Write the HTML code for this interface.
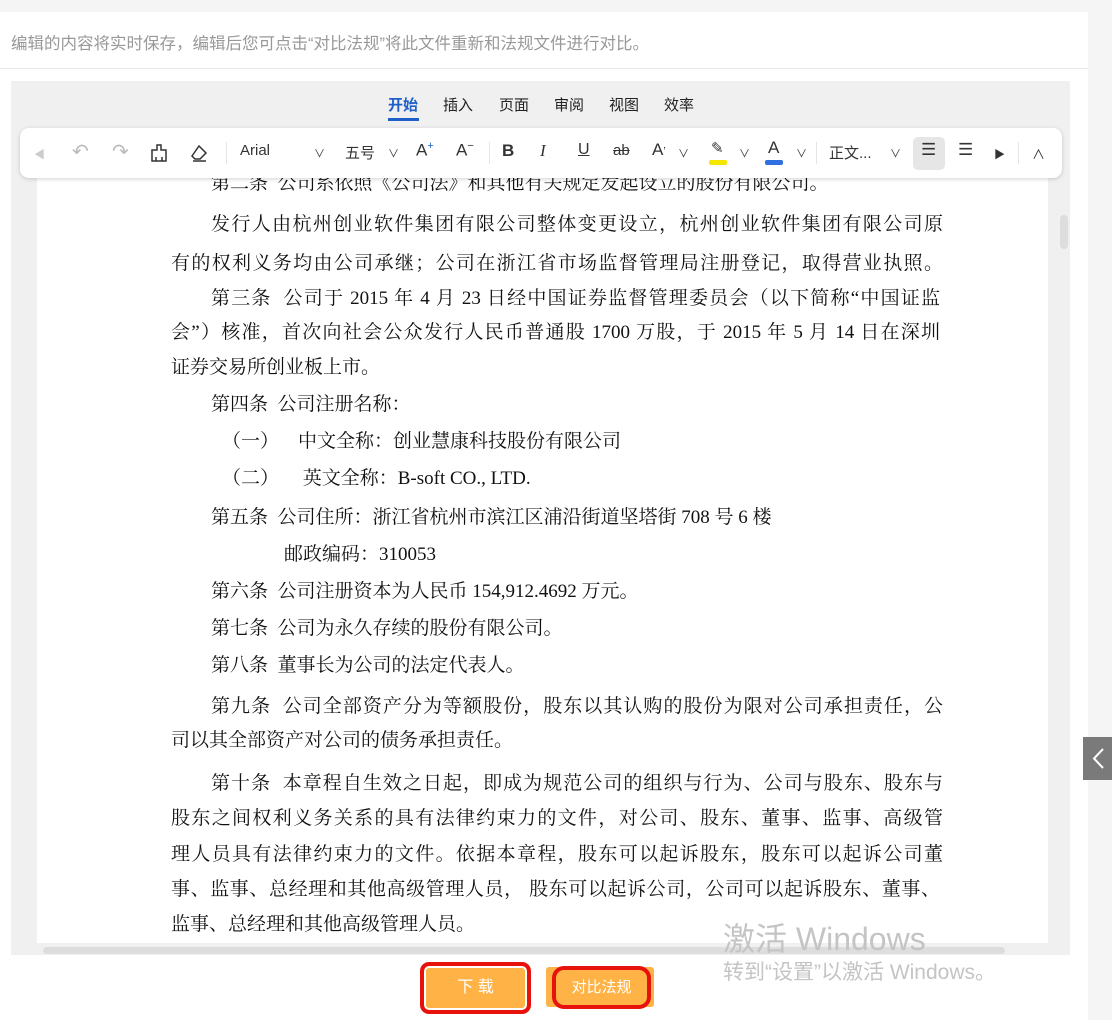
<!DOCTYPE html>
<html><head><meta charset="utf-8"><style>
*{margin:0;padding:0;box-sizing:border-box}
body{width:1112px;height:1020px;background:#f5f5f5;position:relative;overflow:hidden;font-family:"Liberation Sans","Noto Sans CJK SC",sans-serif}
.panel{position:absolute;left:0;top:12px;width:1088px;height:1008px;background:#fff}
.hint{position:absolute;left:11px;top:30px;font-size:16.5px;color:#999;white-space:nowrap}
.divider{position:absolute;left:0;top:68px;width:1088px;height:1px;background:#e8e8e8}
.gray{position:absolute;left:11px;top:81px;width:1059px;height:874px;background:#f0f0f0}
.tabs{position:absolute;top:94px;left:388px;font-size:15px;color:#222}
.tabs span{position:absolute;white-space:nowrap}
.tb{position:absolute;left:20px;top:128px;width:1042px;height:50px;background:#fff;border-radius:9px;box-shadow:0 1px 4px rgba(0,0,0,.18);z-index:3}
.tb .i{position:absolute;top:14px;font-size:15px;color:#333;white-space:nowrap}
.page{position:absolute;left:37px;top:165px;width:1011px;height:778px;background:#fff;overflow:hidden}
.l{position:absolute;left:171px;font-family:"Liberation Serif","Noto Serif CJK SC",serif;font-size:19px;color:#111;white-space:nowrap;line-height:24px}
.j{width:772px;text-align:justify;text-align-last:justify}
.hs{position:absolute;left:43px;top:947px;width:962px;height:7px;background:#ddd;border-radius:4px}
.vs{position:absolute;left:1060px;top:215px;width:8px;height:34px;background:#ddd;border-radius:4px}
.side{position:absolute;left:1083px;top:737px;width:29px;height:43px;background:#7a7a7a}
.btn{position:absolute;background:#ffb347;color:#fff;font-size:16px;text-align:center}
.wm{position:absolute;color:#c4c4c4;white-space:nowrap}
</style></head><body>
<div class="panel"></div>
<div class="hint">编辑的内容将实时保存，编辑后您可点击“对比法规”将此文件重新和法规文件进行对比。</div>
<div class="divider"></div>
<div class="gray"></div>
<div class="tabs">
<span style="left:0;color:#1f5fc9;font-weight:bold">开始</span>
<span style="left:55px">插入</span><span style="left:111px">页面</span><span style="left:166px">审阅</span><span style="left:221px">视图</span><span style="left:276px">效率</span>
</div>
<div style="position:absolute;left:388px;top:118px;width:31px;height:3px;background:#1f5fc9"></div>
<div class="page">
<div class="l j" style="top:7px;left:174px;width:auto">第二条&nbsp; 公司系依照《公司法》和其他有关规定发起设立的股份有限公司。</div>
</div>
<div class="tb">
<span class="i" style="left:14px;color:#ccc;font-size:11px;top:18px">◀</span>
<span class="i" style="left:52px;color:#bbb;font-size:20px;top:11px">↶</span>
<span class="i" style="left:92px;color:#bbb;font-size:20px;top:11px">↷</span>
<svg style="position:absolute;left:130px;top:16px" width="18" height="18" viewBox="0 0 18 18" fill="none" stroke="#333" stroke-width="1.5"><path d="M7 1h4v5h5v11H2V6h5z M6 17v-4M12 17v-4"/></svg>
<svg style="position:absolute;left:170px;top:16px" width="18" height="18" viewBox="0 0 18 18" fill="none" stroke="#333" stroke-width="1.5"><path d="M9 2l7 7-6 6H5l-3-3z M3 17h13"/></svg>
<div style="position:absolute;left:206px;top:14px;width:1px;height:22px;background:#e5e5e5"></div>
<span class="i" style="left:220px">Arial</span><span class="i" style="left:294px;font-size:11px;top:17px">∨</span>
<span class="i" style="left:325px">五号</span><span class="i" style="left:368px;font-size:11px;top:17px">∨</span>
<span class="i" style="left:396px;font-size:17px;top:12px">A<sup style="font-size:11px;color:#1f5fc9">+</sup></span>
<span class="i" style="left:436px;font-size:17px;top:12px">A<sup style="font-size:11px">−</sup></span>
<div style="position:absolute;left:469px;top:14px;width:1px;height:22px;background:#e5e5e5"></div>
<span class="i" style="left:482px;font-weight:bold;font-size:17px;top:13px">B</span>
<span class="i" style="left:520px;font-style:italic;font-size:17px;top:13px;font-family:'Liberation Serif',serif">I</span>
<span class="i" style="left:558px;text-decoration:underline;font-size:16px;top:13px">U</span>
<span class="i" style="left:593px;text-decoration:line-through;font-size:15px;top:14px">ab</span>
<span class="i" style="left:632px;font-size:17px;top:12px">A<span style="font-size:11px">ʼ</span></span><span class="i" style="left:658px;font-size:11px;top:17px">∨</span>
<span class="i" style="left:691px;font-size:15px;top:11px">✎</span><div style="position:absolute;left:689px;top:32px;width:18px;height:5px;background:#f5e600;border-radius:2px"></div><span class="i" style="left:719px;font-size:11px;top:17px">∨</span>
<span class="i" style="left:748px;font-size:17px;top:10px">A</span><div style="position:absolute;left:745px;top:32px;width:18px;height:5px;background:#2f6fe0;border-radius:2px"></div><span class="i" style="left:776px;font-size:11px;top:17px">∨</span>
<div style="position:absolute;left:796px;top:14px;width:1px;height:22px;background:#e5e5e5"></div>
<span class="i" style="left:809px">正文...</span><span class="i" style="left:870px;font-size:11px;top:17px">∨</span>
<div style="position:absolute;left:893px;top:9px;width:32px;height:33px;background:#e6e6e6;border-radius:5px"></div>
<span class="i" style="left:901px;font-size:17px;top:12px">☰</span>
<span class="i" style="left:938px;font-size:17px;top:12px">☰</span>
<span class="i" style="left:974px;font-size:11px;top:18px">▶</span>
<div style="position:absolute;left:998px;top:14px;width:1px;height:22px;background:#e5e5e5"></div>
<span class="i" style="left:1012px;font-size:13px;top:16px">∧</span>
</div>
<div class="l j" style="top:213px;left:211px;width:732px">发行人由杭州创业软件集团有限公司整体变更设立，杭州创业软件集团有限公司原</div>
<div class="l j" style="top:252px">有的权利义务均由公司承继；公司在浙江省市场监督管理局注册登记，取得营业执照。</div>
<div class="l j" style="top:287px;left:211px;width:729px">第三条&nbsp; 公司于 2015 年 4 月 23 日经中国证券监督管理委员会（以下简称“中国证监</div>
<div class="l j" style="top:321px;width:769px">会”）核准，首次向社会公众发行人民币普通股 1700 万股，于 2015 年 5 月 14 日在深圳</div>
<div class="l" style="top:356px">证券交易所创业板上市。</div>
<div class="l" style="top:393px;left:211px">第四条&nbsp; 公司注册名称：</div>
<div class="l" style="top:430px;left:222px">（一）&nbsp;&nbsp;&nbsp; 中文全称：创业慧康科技股份有限公司</div>
<div class="l" style="top:467px;left:222px">（二）&nbsp;&nbsp;&nbsp;&nbsp; 英文全称：B-soft CO., LTD.</div>
<div class="l" style="top:506px;left:211px">第五条&nbsp; 公司住所：浙江省杭州市滨江区浦沿街道坚塔街 708 号 6 楼</div>
<div class="l" style="top:543px;left:284px">邮政编码：310053</div>
<div class="l" style="top:580px;left:211px">第六条&nbsp; 公司注册资本为人民币 154,912.4692 万元。</div>
<div class="l" style="top:617px;left:211px">第七条&nbsp; 公司为永久存续的股份有限公司。</div>
<div class="l" style="top:654px;left:211px">第八条&nbsp; 董事长为公司的法定代表人。</div>
<div class="l j" style="top:695px;left:211px;width:732px">第九条&nbsp; 公司全部资产分为等额股份，股东以其认购的股份为限对公司承担责任，公</div>
<div class="l" style="top:729px">司以其全部资产对公司的债务承担责任。</div>
<div class="l j" style="top:772px;left:211px;width:732px">第十条&nbsp; 本章程自生效之日起，即成为规范公司的组织与行为、公司与股东、股东与</div>
<div class="l j" style="top:807px">股东之间权利义务关系的具有法律约束力的文件，对公司、股东、董事、监事、高级管</div>
<div class="l j" style="top:843px">理人员具有法律约束力的文件。依据本章程，股东可以起诉股东，股东可以起诉公司董</div>
<div class="l j" style="top:878px;width:769px">事、监事、总经理和其他高级管理人员，&nbsp;股东可以起诉公司，公司可以起诉股东、董事、</div>
<div class="l" style="top:913px">监事、总经理和其他高级管理人员。</div>
<div class="hs"></div>
<div class="vs"></div>
<div class="side"><svg width="29" height="43" viewBox="0 0 29 43"><path d="M20 12l-9 9.5 9 9.5" fill="none" stroke="#fff" stroke-width="2"/></svg></div>
<div class="btn" style="left:420px;top:962px;width:111px;height:52px;border:4px solid #e8120c;border-radius:9px;line-height:44px;box-shadow:inset 0 0 0 2px #fff">下 载</div>
<div class="btn" style="left:546px;top:967px;width:108px;height:40px;border-radius:3px"></div>
<div class="btn" style="left:552px;top:966px;width:99px;height:43px;border:4px solid #e8120c;border-radius:12px;line-height:35px;font-size:15px">对比法规</div>
<div class="wm" style="left:723px;top:914px;font-size:32px">激活 Windows</div>
<div class="wm" style="left:723px;top:956px;font-size:21px">转到“设置”以激活 Windows。</div>
</body></html>
